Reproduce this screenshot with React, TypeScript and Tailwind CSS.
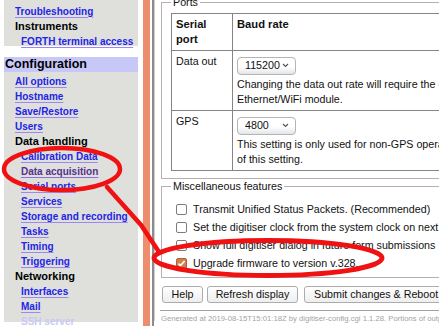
import React from 'react'

type Kind = 'link' | 'visited' | 'heading' | 'faded'

interface NavItem {
  label: string
  level: 1 | 2
  kind: Kind
}

const topItems: NavItem[] = [
  { label: 'Troubleshooting', level: 1, kind: 'link' },
  { label: 'Instruments', level: 1, kind: 'heading' },
  { label: 'FORTH terminal access', level: 2, kind: 'link' },
]

const configItems: NavItem[] = [
  { label: 'All options', level: 1, kind: 'link' },
  { label: 'Hostname', level: 1, kind: 'link' },
  { label: 'Save/Restore', level: 1, kind: 'link' },
  { label: 'Users', level: 1, kind: 'link' },
  { label: 'Data handling', level: 1, kind: 'heading' },
  { label: 'Calibration Data', level: 2, kind: 'link' },
  { label: 'Data acquisition', level: 2, kind: 'visited' },
  { label: 'Serial ports', level: 2, kind: 'link' },
  { label: 'Services', level: 2, kind: 'link' },
  { label: 'Storage and recording', level: 2, kind: 'link' },
  { label: 'Tasks', level: 2, kind: 'link' },
  { label: 'Timing', level: 2, kind: 'link' },
  { label: 'Triggering', level: 2, kind: 'link' },
  { label: 'Networking', level: 1, kind: 'heading' },
  { label: 'Interfaces', level: 2, kind: 'link' },
  { label: 'Mail', level: 2, kind: 'link' },
  { label: 'SSH server', level: 2, kind: 'faded' },
]

const kindClass: Record<Kind, string> = {
  link: 'text-[10px] text-[#2424e6] underline decoration-[#9c88ee] underline-offset-[1.5px]',
  visited: 'text-[10px] text-[#55308f] underline decoration-[#8a6fd8] underline-offset-[1.5px]',
  heading: 'text-[11px] text-black',
  faded: 'text-[10px] text-[#c9c9f3] underline decoration-[#dcd4f6] underline-offset-[1.5px]',
}

const NavLine: React.FC<{ item: NavItem }> = ({ item }) => (
  <div
    className={
      'h-[15px] whitespace-nowrap font-bold leading-[15px] ' +
      (item.level === 1 ? 'pl-[11px]' : 'pl-[17px]')
    }
  >
    <span className={kindClass[item.kind]}>{item.label}</span>
  </div>
)

const Select: React.FC<{ value: string }> = ({ value }) => (
  <div className="my-[2.5px] flex h-[18px] w-[59px] items-center justify-between rounded-[4px] border border-[#b4b4b4] bg-linear-to-b from-white from-55% to-[#e2e5e9] pl-[7px] pr-[6px] leading-[15px]">
    <span>{value}</span>
    <svg width="7" height="5" viewBox="0 0 7 5" fill="none">
      <path d="M1 1l2.5 2.5L6 1" stroke="#555" strokeWidth="1.2" />
    </svg>
  </div>
)

const Check: React.FC<{ checked?: boolean }> = ({ checked }) =>
  checked ? (
    <span className="flex h-[11px] w-[11px] shrink-0 items-center justify-center rounded-[2px] border border-[#a8643b] bg-[#cf814d]">
      <svg width="9" height="9" viewBox="0 0 9 9" fill="none">
        <path d="M1.5 4.6l2 2L7.6 2" stroke="white" strokeWidth="1.6" />
      </svg>
    </span>
  ) : (
    <span className="h-[11px] w-[11px] shrink-0 rounded-[2px] border border-[#7c7c7c] bg-white" />
  )

const options = [
  { label: 'Transmit Unified Status Packets. (Recommended)', checked: false },
  { label: 'Set the digitiser clock from the system clock on next boot', checked: false },
  { label: 'Show full digitiser dialog in future form submissions', checked: false },
  { label: 'Upgrade firmware to version v.328.', checked: true },
]

const cell = 'border border-[#858585] px-[4px] py-[3px] text-left align-top'
const btn =
  'h-[17px] shrink-0 rounded-[3px] border border-[#acacac] bg-linear-to-b from-white to-[#eeeeee] text-[10.7px] leading-[15px] text-[#111]'

export default function App() {
  return (
    <div className="relative flex h-[326px] w-[439px] overflow-hidden bg-white font-['Liberation_Sans',Arial,sans-serif] text-[#111]">
      {/* sidebar */}
      <div className="ml-[4px] flex w-[134px] shrink-0 flex-col">
        <div className="h-[46px] bg-[#dfe0dc] pt-[1.5px]">
          {topItems.map((item) => (
            <NavLine key={item.label} item={item} />
          ))}
        </div>
        <div className="mt-[11px] h-[265px] bg-[#dfe0dc]">
          <div className="h-[15px] bg-[#c8c8f8] pl-[1px] text-[12.5px] font-bold leading-[15px] text-black">
            Configuration
          </div>
          {configItems.map((item) => (
            <NavLine key={item.label} item={item} />
          ))}
        </div>
      </div>

      <div className="ml-[5px] w-[7px] shrink-0 bg-[#ee8d6d]" />

      {/* main frame */}
      <div className="ml-[2px] w-[600px] shrink-0 border-l-2 border-[#8c8c8c]">
        <div className="h-full border-l border-[#cfcfcf] pl-[6px] text-[10.7px] leading-[15px]">
          <fieldset className="mt-[-5px] border border-[#b7afb3] pb-[7px] pl-[9px] pt-[3px]">
            <legend className="px-[2px] leading-[15px]">Ports</legend>
            <table className="border-collapse">
              <thead>
                <tr>
                  <th className={cell + ' w-[61px] text-[11.2px]'}>
                    Serial
                    <br />
                    port
                  </th>
                  <th className={cell + ' align-middle text-[11.2px]'}>Baud rate</th>
                </tr>
              </thead>
              <tbody>
                <tr>
                  <td className={cell}>Data out</td>
                  <td className={cell + ' whitespace-nowrap'}>
                    <Select value="115200" />
                    Changing the data out rate will require the corresponding change to the
                    <br />
                    Ethernet/WiFi module.
                  </td>
                </tr>
                <tr>
                  <td className={cell}>GPS</td>
                  <td className={cell + ' whitespace-nowrap'}>
                    <Select value="4800" />
                    This setting is only used for non-GPS operation. See the manual for details
                    <br />
                    of this setting.
                  </td>
                </tr>
              </tbody>
            </table>
          </fieldset>

          <fieldset className="border border-[#b7afb3] pb-[5px] pl-[9px] pt-[6px]">
            <legend className="px-[2px] leading-[15px]">Miscellaneous features</legend>
            {options.map((o) => (
              <div key={o.label} className="ml-[5px] flex h-[18px] items-center gap-[6px] whitespace-nowrap">
                <Check checked={o.checked} />
                <span>{o.label}</span>
              </div>
            ))}
          </fieldset>

          <div className="ml-[1px] mt-[8px] flex">
            <button className={btn + ' w-[41px]'}>Help</button>
            <button className={btn + ' ml-[4px] w-[91px]'}>Refresh display</button>
            <button className={btn + ' ml-[6px] w-[150px] text-left pl-[9px]'}>
              Submit changes &amp; Reboot
            </button>
          </div>

          <div className="ml-[-1px] mt-[7px] border-t border-[#a0a0a0]" />
          <div className="mt-[3px] whitespace-nowrap text-[7.7px] leading-[10px] text-[#a3a3a3]">
            Generated at 2019-08-15T15:01:18Z by digitiser-config.cgi 1.1.28. Portions of output
            copyright Güralp Systems Ltd.
          </div>
        </div>
      </div>

      {/* red annotation drawn over the page */}
      <svg
        className="pointer-events-none absolute left-0 top-0"
        width="439"
        height="326"
        viewBox="0 0 439 326"
        fill="none"
        stroke="#f01212"
      >
        <ellipse cx="62" cy="169" rx="58" ry="21" strokeWidth="4.5" />
        <path d="M107 187 L141 225 L159 252" strokeWidth="4.5" strokeLinecap="round" />
        <ellipse cx="268" cy="258" rx="114" ry="17.5" strokeWidth="5" />
      </svg>
    </div>
  )
}
